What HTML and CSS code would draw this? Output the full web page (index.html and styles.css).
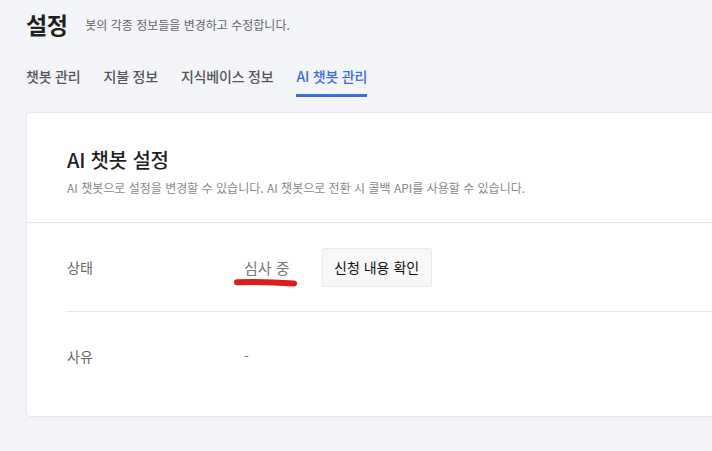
FILE: index.html
```html
<!DOCTYPE html>
<html lang="ko">

<head>
    <meta charset="UTF-8">
    <meta name="viewport" content="width=device-width, initial-scale=1.0">
    <title>설정</title>
    <link rel="stylesheet" href="styles.css">
</head>

<body>
    <div class="page">
        <!-- 상단 제목 -->
        <div class="page-head">
            <h1 class="page-title">설정</h1>
            <p class="page-desc">봇의 각종 정보들을 변경하고 수정합니다.</p>
        </div>

        <!-- 탭 -->
        <ul class="tabs">
            <li class="tab">챗봇 관리</li>
            <li class="tab">지불 정보</li>
            <li class="tab">지식베이스 정보</li>
            <li class="tab active">AI 챗봇 관리</li>
        </ul>

        <!-- 카드 -->
        <div class="card">
            <div class="card-head">
                <h2 class="card-title">AI 챗봇 설정</h2>
                <p class="card-desc">AI 챗봇으로 설정을 변경할 수 있습니다. AI 챗봇으로 전환 시 콜백 API를 사용할 수 있습니다.</p>
            </div>
            <div class="card-body">
                <div class="row">
                    <div class="row-label">상태</div>
                    <div class="row-value">
                        <span class="status">심사 중
                            <svg class="mark" width="66" height="10" viewBox="0 0 66 10">
                                <path d="M4 4.2 C 20 3.6, 44 4.2, 61 5.6" fill="none" stroke="#d91c1c" stroke-width="6" stroke-linecap="round" />
                            </svg>
                        </span>
                        <button class="btn">신청 내용 확인</button>
                    </div>
                </div>
                <div class="row">
                    <div class="row-label">사유</div>
                    <div class="row-value">-</div>
                </div>
            </div>
        </div>
    </div>
</body>

</html>
```

FILE: styles.css
```css
html,
body {
    margin: 0;
    padding: 0;
}

body {
    background-color: #f3f4f8;
    font-family: "Noto Sans CJK KR", "Noto Sans", sans-serif;
    color: #222222;
    overflow: hidden;
}

.page {
    padding: 7px 0 0 26px;
}

.page-head {
    display: flex;
    align-items: center;
    gap: 18px;
}

.page-title {
    margin: 0;
    font-size: 23px;
    font-weight: 700;
    line-height: 34px;
    letter-spacing: -0.5px;
    color: #1f1f1f;
}

.page-desc {
    margin: 0;
    font-size: 12px;
    color: #666666;
}

.tabs {
    display: flex;
    gap: 23px;
    list-style: none;
    margin: 25px 0 0;
    padding: 0;
}

.tab {
    font-size: 14px;
    line-height: 20px;
    font-weight: 500;
    color: #555555;
    letter-spacing: -0.2px;
    padding-bottom: 8px;
    border-bottom: 3px solid transparent;
}

.tab.active {
    color: #3c6fd1;
    border-bottom-color: #3c6fd1;
}

.card {
    width: 760px;
    margin-top: 15px;
    background-color: #ffffff;
    border: 1px solid #e6e7eb;
    border-radius: 4px;
}

.card-head {
    padding: 34px 40px 26px;
    border-bottom: 1px solid #e4e5e8;
}

.card-title {
    margin: 0;
    font-size: 20px;
    font-weight: 500;
    line-height: 26px;
    letter-spacing: -0.2px;
    color: #1f1f1f;
}

.card-desc {
    margin: 6px 0 0;
    font-size: 12px;
    color: #888888;
}

.card-body {
    padding: 0 0 16px 40px;
}

.row {
    display: flex;
    align-items: center;
    height: 88px;
    border-bottom: 1px solid #e4e5e8;
}

.row:last-child {
    border-bottom: none;
}

.row-label {
    width: 177px;
    font-size: 14px;
    color: #666666;
}

.row-value {
    display: flex;
    align-items: center;
    font-size: 14px;
    color: #777777;
}

.status {
    position: relative;
    font-size: 15px;
    margin-right: 32px;
}

.mark {
    position: absolute;
    left: -11px;
    top: 21px;
}

.btn {
    width: 110px;
    height: 39px;
    padding: 0;
    background-color: #f7f7f8;
    border: 1px solid #eaeaec;
    border-radius: 2px;
    font-family: inherit;
    font-size: 14px;
    font-weight: 400;
    color: #111111;
    cursor: pointer;
}
```
